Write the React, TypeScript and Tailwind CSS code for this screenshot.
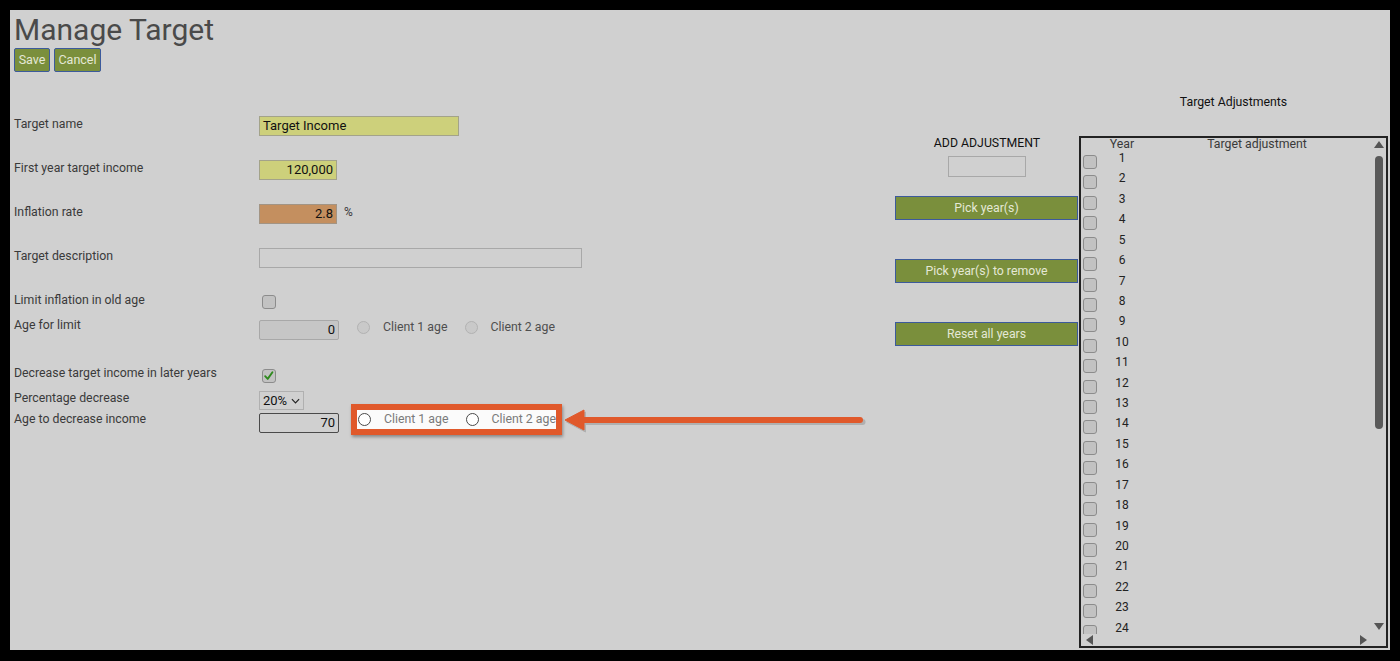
import React from 'react'

const rowsCount = 24

function Radio({ light }: { light?: boolean }) {
  // light = the white "highlighted" radios, otherwise the disabled gray ones
  return light ? (
    <span className="block w-[13px] h-[13px] rounded-full border border-[#4a4a4a] bg-white shrink-0" />
  ) : (
    <span className="block w-[13px] h-[13px] rounded-full border border-[#b2b2b2] bg-[#c9c9c9] shrink-0" />
  )
}

function ClientRadios({ light }: { light?: boolean }) {
  const txt = light ? 'text-[#7a7a7a]' : 'text-[#4e4e4e]'
  return (
    <div className="flex items-center whitespace-nowrap">
      <Radio light={light} />
      <span className={`ml-[13px] ${txt}`}>Client 1 age</span>
      <span className="ml-[18px]">
        <Radio light={light} />
      </span>
      <span className={`ml-[12px] ${txt}`}>Client 2 age</span>
    </div>
  )
}

function Checkbox({ checked }: { checked?: boolean }) {
  return (
    <span className="relative block w-[14px] h-[14px] rounded-[3px] border border-[#8c8c8c] bg-[#c2c2c2] shrink-0">
      {checked && (
        <svg viewBox="0 0 14 14" className="absolute left-0 top-0 w-[12px] h-[12px]">
          <path d="M2.5 7.2 L5.5 10.4 L11 2.6" fill="none" stroke="#2f8a1e" strokeWidth="2.2" strokeLinecap="round" strokeLinejoin="round" />
        </svg>
      )}
    </span>
  )
}

function Label({ children }: { children: React.ReactNode }) {
  return <div className="w-[245px] shrink-0 leading-4 text-[#3a3a3a]">{children}</div>
}

function SideButton({ children, className = '' }: { children: React.ReactNode; className?: string }) {
  return (
    <button className={`w-[183px] h-[24px] bg-[#7a8f3c] border border-[#3c5a9c] text-[#e4e8d6] text-[12.3px] leading-none ${className}`}>
      {children}
    </button>
  )
}

export default function App() {
  const years = Array.from({ length: rowsCount }, (_, i) => i + 1)

  return (
    <div className="w-[1400px] h-[661px] bg-black pt-[10px] pl-[10px] font-['Roboto',sans-serif] text-[12.3px]">
      <div className="w-[1380px] h-[640px] bg-[#d0d0d0] overflow-hidden">
        {/* header */}
        <div className="pl-[4px] pt-[5px]">
          <h1 className="text-[30px] leading-[30px] text-[#4a4a4a]">Manage Target</h1>
          <div className="mt-[3px] flex gap-[4px]">
            <button className="w-[36px] h-[24px] bg-[#7a8f3c] border border-[#3c5a9c] rounded-[2px] text-[#e4e8d6] text-[12.5px] leading-none">Save</button>
            <button className="w-[47px] h-[24px] bg-[#7a8f3c] border border-[#3c5a9c] rounded-[2px] text-[#e4e8d6] text-[12.5px] leading-none">Cancel</button>
          </div>
        </div>

        <div className="flex pl-[4px]">
          {/* form */}
          <div className="w-[881px] pt-[44px]">
            <div className="flex items-start h-[44px]">
              <Label>Target name</Label>
              <div className="w-[200px] h-[20px] bg-[#cdd07b] border border-[#a3a38a] px-[3px] leading-[18px] text-[13px] text-[#111]">Target Income</div>
            </div>
            <div className="flex items-start h-[44px]">
              <Label>First year target income</Label>
              <div className="w-[78px] h-[20px] bg-[#cdd07b] border border-[#a3a38a] px-[3px] leading-[18px] text-[13px] text-right text-[#111]">120,000</div>
            </div>
            <div className="flex items-start h-[44px]">
              <Label>Inflation rate</Label>
              <div className="w-[78px] h-[20px] bg-[#c48f5f] border border-[#a29484] px-[3px] leading-[18px] text-[13px] text-right text-[#111]">2.8</div>
              <span className="ml-[7px] text-[12px] leading-4 text-[#3a3a3a]">%</span>
            </div>
            <div className="flex items-start h-[44px]">
              <Label>Target description</Label>
              <div className="w-[323px] h-[20px] border border-[#a8a8a8] bg-[#d0d0d0]" />
            </div>
            <div className="flex items-start h-[25px]">
              <Label>Limit inflation in old age</Label>
              <span className="mt-[3px] ml-[3px]">
                <Checkbox />
              </span>
            </div>
            <div className="flex items-start h-[48px]">
              <Label>Age for limit</Label>
              <div className="mt-[3px] w-[80px] h-[20px] bg-[#c6c6c6] border border-[#a8a8a8] rounded-[2px] px-[3px] leading-[18px] text-[13px] text-right text-[#111]">0</div>
              <div className="ml-[18px] mt-[3px] h-[14px] flex items-center">
                <ClientRadios />
              </div>
            </div>
            <div className="flex items-start h-[25px]">
              <Label>Decrease target income in later years</Label>
              <span className="mt-[4px] ml-[3px]">
                <Checkbox checked />
              </span>
            </div>
            <div className="flex items-start h-[21px]">
              <Label>Percentage decrease</Label>
              <div className="mt-[1px] w-[45px] h-[19px] border border-[#b0b0b0] flex items-center pl-[3px] text-[13px] text-[#111] leading-none">
                20%
                <svg viewBox="0 0 10 6" className="ml-[4px] w-[9px] h-[6px]">
                  <path d="M1 1 L5 5 L9 1" fill="none" stroke="#222" strokeWidth="1.3" />
                </svg>
              </div>
            </div>
            <div className="flex items-start h-[24px]">
              <Label>Age to decrease income</Label>
              <div className="mt-[2px] w-[80px] h-[20px] border border-[#4a4a4a] rounded-[2px] px-[3px] leading-[18px] text-[13px] text-right text-[#111]">70</div>
              <div className="ml-[12px] mt-[-7px] w-[211px] h-[31px] border-[6px] border-[#e0592b] bg-[#fbfbfb] shadow-[1px_2px_3px_rgba(0,0,0,0.35)] overflow-hidden flex items-center pl-[1px]">
                <ClientRadios light />
              </div>
              <svg viewBox="0 0 303 30" className="mt-[-6px] ml-[1px] w-[303px] h-[30px]">
                <g transform="translate(1.5,2)" fill="#8a8a8a" stroke="#8a8a8a" opacity="0.45">
                  <path d="M2 15 L21 5 L21 25 Z" strokeLinejoin="round" strokeWidth="1" />
                  <line x1="18" y1="15" x2="298" y2="15" strokeWidth="6" strokeLinecap="round" />
                </g>
                <path d="M2 15 L21 5 L21 25 Z" fill="#e0592b" stroke="#e0592b" strokeLinejoin="round" strokeWidth="1" />
                <line x1="18" y1="15" x2="297" y2="15" stroke="#e0592b" strokeWidth="6" strokeLinecap="round" />
              </svg>
            </div>
          </div>

          {/* add adjustment column */}
          <div className="w-[184px] pt-[63px] flex flex-col">
            <div className="text-center leading-4 text-[#111]">ADD ADJUSTMENT</div>
            <div className="mt-[5px] mx-auto w-[78px] h-[21px] border border-[#a8a8a8]" />
            <SideButton className="mt-[19px]">Pick year(s)</SideButton>
            <SideButton className="mt-[39px]">Pick year(s) to remove</SideButton>
            <SideButton className="mt-[39px]">Reset all years</SideButton>
          </div>

          {/* adjustments table */}
          <div className="w-[309px] pt-[22px]">
            <div className="text-center leading-4 text-[#111]">Target Adjustments</div>
            <div className="mt-[26px] h-[512px] border-2 border-[#222] flex flex-col">
              <div className="flex flex-1 min-h-0">
                <div className="flex-1 overflow-hidden">
                  <div className="flex h-[13px] leading-[13px] text-[#3a3a3a]">
                    <span className="w-[16px]" />
                    <span className="w-[50px] text-center">Year</span>
                    <span className="w-[220px] text-center">Target adjustment</span>
                  </div>
                  {years.map((y) => (
                    <div key={y} className="flex h-[20.43px] items-start">
                      <span className="ml-[2px] mt-[4px]">
                        <Checkbox />
                      </span>
                      <span className="mt-[1px] w-[50px] text-center leading-[12px] text-[12px] text-[#222]">{y}</span>
                    </div>
                  ))}
                </div>
                {/* vertical scrollbar */}
                <div className="w-[14px] flex flex-col items-center">
                  <svg viewBox="0 0 10 7" className="mt-[3px] w-[10px] h-[7px]">
                    <path d="M0 7 L5 0 L10 7 Z" fill="#555" />
                  </svg>
                  <div className="mt-[8px] w-[8px] h-[273px] rounded-full bg-[#595959]" />
                  <div className="flex-1" />
                  <svg viewBox="0 0 10 7" className="mb-[4px] w-[10px] h-[7px]">
                    <path d="M0 0 L5 7 L10 0 Z" fill="#555" />
                  </svg>
                </div>
              </div>
              {/* horizontal scrollbar */}
              <div className="h-[12px] flex items-center px-[5px]">
                <svg viewBox="0 0 7 10" className="w-[7px] h-[10px]">
                  <path d="M7 0 L0 5 L7 10 Z" fill="#555" />
                </svg>
                <div className="flex-1" />
                <svg viewBox="0 0 7 10" className="mr-[14px] w-[7px] h-[10px]">
                  <path d="M0 0 L7 5 L0 10 Z" fill="#555" />
                </svg>
              </div>
            </div>
          </div>
        </div>
      </div>
    </div>
  )
}
